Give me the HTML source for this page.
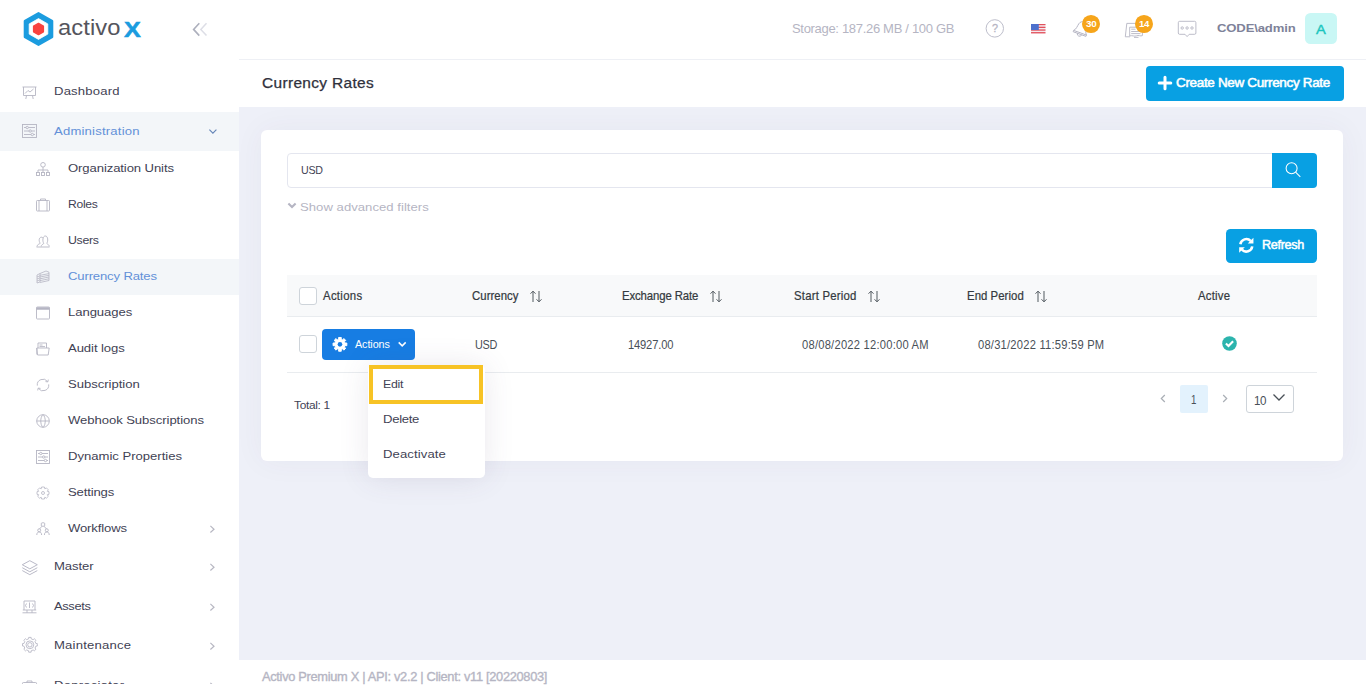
<!DOCTYPE html>
<html lang="en">
<head>
<meta charset="utf-8">
<title>Currency Rates</title>
<style>
*{box-sizing:border-box;margin:0;padding:0}
html,body{width:1366px;height:696px;overflow:hidden}
body{background:#eef0f8;font-family:"Liberation Sans",sans-serif;font-size:13px;color:#3f4254;position:relative}
.abs{position:absolute}
svg{overflow:visible}
.t{position:absolute;white-space:nowrap;line-height:1;transform-origin:0 50%;transform:translateY(-50%)}
.s{font-family:"Liberation Sans",sans-serif}
.g{font-family:"Liberation Sans",sans-serif}
#aside{position:absolute;left:0;top:0;width:239px;height:696px;background:#fff;overflow:hidden}
#topbar{position:absolute;left:239px;top:0;width:1127px;height:60px;background:#fff;border-bottom:1px solid #eef0f5}
#subheader{position:absolute;left:239px;top:60px;width:1127px;height:47px;background:#fff}
#footer{position:absolute;left:239px;top:660px;width:1127px;height:36px;background:#fff}
#card{position:absolute;left:261px;top:130px;width:1082px;height:331px;background:#fff;border-radius:6px;box-shadow:0 0 30px rgba(82,63,105,0.05)}
</style>
</head>
<body>
<div id="aside">
<svg class="abs" style="left:22px;top:11px" width="33" height="36" viewBox="0 0 33 36" stroke-linejoin="round">
<polygon points="16.5,2.2 30.2,10 30.2,26 16.5,33.8 2.8,26 2.8,10" fill="#1b9cdf" stroke="#1b9cdf" stroke-width="2.2"/>
<polygon points="16.5,7.6 25.8,12.9 25.8,23.1 16.5,28.4 7.2,23.1 7.2,12.9" fill="#fff" stroke="#fff" stroke-width="0.8"/>
<polygon points="16.5,12.4 21.4,15.2 21.4,20.8 16.5,23.6 11.6,20.8 11.6,15.2" fill="#f9423f" stroke="#f9423f" stroke-width="1.4"/>
</svg>
<span id="t0" class="t s" style="left:58.00px;top:28.80px;font-size:21.40px;color:#55555d;letter-spacing:0.083px;transform:translateY(-50%) scaleX(1.110);">activo</span>
<span id="t1" class="t s" style="left:123.80px;top:29.70px;font-size:22.40px;color:#1b9cdf;font-weight:700;transform:translateY(-50%) scaleX(1.125);-webkit-text-stroke:0.5px #1b9cdf;">X</span>
<svg class="abs" style="left:190px;top:20px" width="20" height="20" viewBox="190 20 20 20" fill="none" stroke="#b5b5c3" stroke-width="1" ><path d="M199.3 23.2 L193.6 29.4 L199.3 35.6" stroke="#adb0bd" stroke-width="1.6"/><path d="M206.5 23.2 L200.8 29.4 L206.5 35.6" stroke="#dddee6" stroke-width="1.5"/></svg>
<div class="abs" style="left:0;top:112px;width:239px;height:39px;background:#f3f6f9"></div>
<div class="abs" style="left:0;top:259px;width:239px;height:36px;background:#f3f6f9"></div>
<span id="t2" class="t s" style="left:54.00px;top:91.90px;font-size:11.80px;color:#3f4254;letter-spacing:0.161px;transform:translateY(-50%) scaleX(1.110);">Dashboard</span>
<span id="t3" class="t s" style="left:54.00px;top:131.90px;font-size:11.80px;color:#6290d8;letter-spacing:0.175px;transform:translateY(-50%) scaleX(1.110);">Administration</span>
<span id="t4" class="t s" style="left:54.00px;top:566.90px;font-size:11.80px;color:#3f4254;letter-spacing:-0.059px;transform:translateY(-50%) scaleX(1.110);">Master</span>
<span id="t5" class="t s" style="left:54.00px;top:606.90px;font-size:11.80px;color:#3f4254;letter-spacing:-0.300px;transform:translateY(-50%) scaleX(1.091);">Assets</span>
<span id="t6" class="t s" style="left:54.00px;top:645.90px;font-size:11.80px;color:#3f4254;letter-spacing:0.181px;transform:translateY(-50%) scaleX(1.110);">Maintenance</span>
<span id="t7" class="t s" style="left:54.00px;top:685.90px;font-size:11.80px;color:#3f4254;letter-spacing:0.208px;transform:translateY(-50%) scaleX(1.110);">Depreciator</span>
<span id="t8" class="t s" style="left:67.70px;top:168.90px;font-size:11.80px;color:#3f4254;letter-spacing:-0.091px;transform:translateY(-50%) scaleX(1.110);">Organization Units</span>
<span id="t9" class="t s" style="left:67.70px;top:204.90px;font-size:11.80px;color:#3f4254;letter-spacing:-0.300px;transform:translateY(-50%) scaleX(1.029);">Roles</span>
<span id="t10" class="t s" style="left:67.70px;top:240.90px;font-size:11.80px;color:#3f4254;letter-spacing:-0.300px;transform:translateY(-50%) scaleX(1.047);">Users</span>
<span id="t11" class="t s" style="left:67.70px;top:276.90px;font-size:11.80px;color:#6290d8;letter-spacing:-0.136px;transform:translateY(-50%) scaleX(1.110);">Currency Rates</span>
<span id="t12" class="t s" style="left:67.70px;top:312.90px;font-size:11.80px;color:#3f4254;letter-spacing:-0.058px;transform:translateY(-50%) scaleX(1.110);">Languages</span>
<span id="t13" class="t s" style="left:67.70px;top:348.90px;font-size:11.80px;color:#3f4254;letter-spacing:-0.071px;transform:translateY(-50%) scaleX(1.110);">Audit logs</span>
<span id="t14" class="t s" style="left:67.70px;top:384.90px;font-size:11.80px;color:#3f4254;letter-spacing:-0.022px;transform:translateY(-50%) scaleX(1.110);">Subscription</span>
<span id="t15" class="t s" style="left:67.70px;top:420.90px;font-size:11.80px;color:#3f4254;letter-spacing:-0.060px;transform:translateY(-50%) scaleX(1.110);">Webhook Subscriptions</span>
<span id="t16" class="t s" style="left:67.70px;top:456.90px;font-size:11.80px;color:#3f4254;letter-spacing:-0.014px;transform:translateY(-50%) scaleX(1.110);">Dynamic Properties</span>
<span id="t17" class="t s" style="left:67.70px;top:492.90px;font-size:11.80px;color:#3f4254;letter-spacing:-0.133px;transform:translateY(-50%) scaleX(1.110);">Settings</span>
<span id="t18" class="t s" style="left:67.70px;top:528.90px;font-size:11.80px;color:#3f4254;letter-spacing:-0.129px;transform:translateY(-50%) scaleX(1.110);">Workflows</span>
<svg class="abs" style="left:205px;top:124px" width="16" height="15" viewBox="205 124 16 15" fill="none" stroke="#6585b8" stroke-width="1.15" ><path d="M209.4 129.6 L212.9 133.1 L216.4 129.6"/></svg>
<svg class="abs" style="left:208.9px;top:524.8px" width="7" height="8.4" viewBox="0 0 7 8.4" fill="none" stroke="#b7b7c2" stroke-width="1.2" ><path d="M1.4 0.9 L5 4.2 L1.4 7.5"/></svg>
<svg class="abs" style="left:208.9px;top:562.8px" width="7" height="8.4" viewBox="0 0 7 8.4" fill="none" stroke="#b7b7c2" stroke-width="1.2" ><path d="M1.4 0.9 L5 4.2 L1.4 7.5"/></svg>
<svg class="abs" style="left:208.9px;top:602.8px" width="7" height="8.4" viewBox="0 0 7 8.4" fill="none" stroke="#b7b7c2" stroke-width="1.2" ><path d="M1.4 0.9 L5 4.2 L1.4 7.5"/></svg>
<svg class="abs" style="left:208.9px;top:641.8px" width="7" height="8.4" viewBox="0 0 7 8.4" fill="none" stroke="#b7b7c2" stroke-width="1.2" ><path d="M1.4 0.9 L5 4.2 L1.4 7.5"/></svg>
<svg class="abs" style="left:208.9px;top:681.8px" width="7" height="8.4" viewBox="0 0 7 8.4" fill="none" stroke="#b7b7c2" stroke-width="1.2" ><path d="M1.4 0.9 L5 4.2 L1.4 7.5"/></svg>
<svg class="abs" style="left:22px;top:85.8px" width="15" height="14" viewBox="0 0 15 14" fill="none" stroke="#b5b5c3" stroke-width="0.9" ><path d="M0.5 1 H14.5 M1.5 1 V9.5 H13.5 V1 M3 7.5 L6 4.5 L8 6 L11.5 3 M4.5 9.5 L3.8 13 M10.5 9.5 L11.2 13"/></svg>
<svg class="abs" style="left:22px;top:124.0px" width="15" height="14" viewBox="0 0 15 14" fill="none" stroke="#b5b5c3" stroke-width="0.9" ><rect x="0.5" y="0.5" width="14" height="13"/><path d="M2 3.5 H4 M6.5 3.5 H13 M2 7 H7 M9.5 7 H13 M2 10.5 H9 M11.5 10.5 H13"/><circle cx="5.2" cy="3.5" r="1.2"/><circle cx="8.2" cy="7" r="1.2"/><circle cx="10.3" cy="10.5" r="1.2"/></svg>
<svg class="abs" style="left:36px;top:162.0px" width="14" height="14" viewBox="0 0 14 14" fill="none" stroke="#b5b5c3" stroke-width="0.9" ><circle cx="7" cy="2.8" r="2.3"/><path d="M7 5.1 V8 M2 10.5 V8 H12 V10.5 M7 8 V10.5"/><rect x="0.5" y="10.5" width="3" height="3"/><rect x="5.5" y="10.5" width="3" height="3"/><rect x="10.5" y="10.5" width="3" height="3"/></svg>
<svg class="abs" style="left:36px;top:198.0px" width="14" height="14" viewBox="0 0 14 14" fill="none" stroke="#b5b5c3" stroke-width="0.9" ><rect x="0.5" y="2.5" width="13" height="10.5" rx="0.8"/><path d="M3 2.5 V13 M11 2.5 V13 M4.5 2.5 V1 H9.5 V2.5"/></svg>
<svg class="abs" style="left:36px;top:234.0px" width="14" height="14" viewBox="0 0 14 14" fill="none" stroke="#b5b5c3" stroke-width="0.9" ><path d="M0.5 13 H13.5 M1 12.5 C1 10.5 3.2 10.2 4.2 9.3 C2.8 7.5 2.6 3.5 5.3 3.2 C6.2 3.1 6.8 3.6 7 4.2 M5.2 12.5 C5.2 10.6 7 10.4 7.8 9.4 C6.3 7.3 6.5 2 9.3 2 C12.2 2 12.2 7.3 10.8 9.4 C11.6 10.4 13.2 10.6 13.2 12.5"/></svg>
<svg class="abs" style="left:36px;top:270.0px" width="14" height="14" viewBox="0 0 14 14" fill="none" stroke="#b5b5c3" stroke-width="0.8" ><path d="M1 5 L4 3.5 V12 L1 13 Z M4 3.5 L10 1 L13 2.2 V10.5 L4 12.5 M4 5.3 L13 3.6 M4 7 L13 5.3 M4 8.8 L13 7 M4 10.6 L13 8.8 M1 7 L4 5.8 M1 9 L4 7.8 M1 11 L4 9.8"/></svg>
<svg class="abs" style="left:36px;top:306.0px" width="14" height="14" viewBox="0 0 14 14" fill="none" stroke="#b5b5c3" stroke-width="0.9" ><rect x="0.5" y="1" width="13" height="12" rx="0.8"/><path d="M0.5 2 H13.5 M0.5 3 H13.5" stroke-width="1.6"/></svg>
<svg class="abs" style="left:36px;top:342.0px" width="14" height="14" viewBox="0 0 14 14" fill="none" stroke="#b5b5c3" stroke-width="0.9" ><path d="M2 6 V1 H10.5 V6 M3.5 3 H6.5 M3.5 4.6 H9 M0.8 6 H13.2 L12.2 13 H1.6 Z M0.8 6 V12.5"/></svg>
<svg class="abs" style="left:36px;top:378.0px" width="14" height="14" viewBox="0 0 14 14" fill="none" stroke="#b5b5c3" stroke-width="0.9" ><path d="M1.3 7.6 A5.7 5.7 0 0 1 11.6 3.6 M12.7 6.4 A5.7 5.7 0 0 1 2.4 10.4 M12.3 1.6 L11.8 3.9 L9.5 3.6 M1.7 12.4 L2.2 10.1 L4.5 10.4"/></svg>
<svg class="abs" style="left:36px;top:414.0px" width="14" height="14" viewBox="0 0 14 14" fill="none" stroke="#b5b5c3" stroke-width="0.9" ><circle cx="7" cy="7" r="6.3"/><path d="M0.7 7 H13.3 M7 0.7 C4 3 4 11 7 13.3 M7 0.7 C10 3 10 11 7 13.3"/></svg>
<svg class="abs" style="left:36px;top:450.0px" width="14" height="14" viewBox="0 0 14 14" fill="none" stroke="#b5b5c3" stroke-width="0.9" ><rect x="0.5" y="0.5" width="13" height="13"/><path d="M2 3.5 H3.6 M6 3.5 H12 M2 7 H6.4 M9 7 H12 M2 10.5 H8.2 M10.8 10.5 H12"/><circle cx="4.8" cy="3.5" r="1.2"/><circle cx="7.7" cy="7" r="1.2"/><circle cx="9.5" cy="10.5" r="1.2"/></svg>
<svg class="abs" style="left:36px;top:486.0px" width="14" height="14" viewBox="0 0 14 14" fill="none" stroke="#b5b5c3" stroke-width="0.8" ><path d="M5.6 1 H8.4 L8.8 2.8 L10.4 1.9 L12.3 3.8 L11.3 5.3 L13 5.7 V8.3 L11.3 8.7 L12.3 10.3 L10.4 12.2 L8.8 11.2 L8.4 13 H5.6 L5.2 11.2 L3.6 12.2 L1.7 10.3 L2.7 8.7 L1 8.3 V5.7 L2.7 5.3 L1.7 3.8 L3.6 1.9 L5.2 2.8 Z"/><circle cx="7" cy="7" r="1.5"/></svg>
<svg class="abs" style="left:36px;top:522.0px" width="14" height="14" viewBox="0 0 14 14" fill="none" stroke="#b5b5c3" stroke-width="0.9" ><rect x="5.3" y="0.8" width="3.4" height="3.4" rx="0.8"/><path d="M6 4.2 L3.5 7 M8 4.2 L10.5 7 M0.8 13 C0.8 10.8 1.8 10 3.2 10 C4.6 10 5.6 10.8 5.6 13 M8.4 13 C8.4 10.8 9.4 10 10.8 10 C12.2 10 13.2 10.8 13.2 13"/><circle cx="3.2" cy="8.3" r="1.5"/><circle cx="10.8" cy="8.3" r="1.5"/></svg>
<svg class="abs" style="left:20px;top:558px" width="20" height="19" viewBox="20 558 20 19" fill="none" stroke="#b5b5c3" stroke-width="1" ><g transform="translate(21.4 559.8) scale(1.12 1.1)"><path d="M7.5 0.8 L14.2 4.5 L7.5 8.2 L0.8 4.5 Z M0.8 7.2 L7.5 10.9 L14.2 7.2 M0.8 9.8 L7.5 13.5 L14.2 9.8" stroke-width="0.85"/></g></svg>
<svg class="abs" style="left:22px;top:599.5px" width="15" height="14" viewBox="0 0 15 14" fill="none" stroke="#b5b5c3" stroke-width="0.9" ><path d="M2 10 V1 H13 V10 M0.5 12.8 H14.5 M5 10 V12.8 M10 10 V12.8 M0.8 10 H14.2 M4.5 3.5 L3.5 5.5 L4.5 7.5 M10.5 3.5 L11.5 5.5 L10.5 7.5 M7.5 2.5 V8"/></svg>
<svg class="abs" style="left:20px;top:635px" width="20" height="20" viewBox="20 635 20 20" fill="none" stroke="#b5b5c3" stroke-width="0.85" stroke-linejoin="round"><path d="M28.59 638.84 L28.69 637.40 L31.11 637.40 L31.21 638.84 L33.19 639.66 L34.28 638.71 L35.99 640.42 L35.04 641.51 L35.86 643.49 L37.30 643.59 L37.30 646.01 L35.86 646.11 L35.04 648.09 L35.99 649.18 L34.28 650.89 L33.19 649.94 L31.21 650.76 L31.11 652.20 L28.69 652.20 L28.59 650.76 L26.61 649.94 L25.52 650.89 L23.81 649.18 L24.76 648.09 L23.94 646.11 L22.50 646.01 L22.50 643.59 L23.94 643.49 L24.76 641.51 L23.81 640.42 L25.52 638.71 L26.61 639.66 Z"/><circle cx="29.9" cy="644.8" r="3.9"/><circle cx="29.9" cy="644.8" r="2.2"/></svg>
<svg class="abs" style="left:22px;top:679.5px" width="15" height="14" viewBox="0 0 15 14" fill="none" stroke="#b5b5c3" stroke-width="0.9" ><rect x="0.5" y="2.5" width="14" height="11" rx="0.8"/><path d="M5 2.5 V1 H10 V2.5"/></svg>
<div class="abs" style="left:0;top:684px;width:239px;height:12px;background:#fff"></div>
</div>
<div id="topbar"></div>
<span id="t19" class="t s" style="left:791.60px;top:29.20px;font-size:12.20px;color:#b5b5c3;letter-spacing:-0.300px;transform:translateY(-50%) scaleX(1.068);">Storage: 187.26 MB / 100 GB</span>
<svg class="abs" style="left:984px;top:17px" width="22" height="23" viewBox="984 17 22 23" fill="none" stroke="#bdbecb" stroke-width="1" ><circle cx="994.8" cy="28.4" r="8.7"/></svg>
<span id="t20" class="t s" style="left:991.90px;top:29.10px;font-size:11.40px;color:#b5b5c3;transform:translateY(-50%) scaleX(0.946);-webkit-text-stroke:0.3px #b5b5c3;">?</span>
<svg class="abs" style="left:1030.8px;top:24.3px" width="14.5" height="9.4" viewBox="0 0 14.5 9.4">
<rect width="14.5" height="9.4" fill="#f4e9ee"/>
<g fill="#e2515b"><rect y="0" width="14.5" height="1.2"/><rect y="2.7" width="14.5" height="1.3"/><rect y="5.4" width="14.5" height="1.3"/><rect y="8.1" width="14.5" height="1.3"/></g>
<rect width="7.8" height="6" fill="#4d70cc"/></svg>
<svg class="abs" style="left:1070px;top:18px" width="22" height="22" viewBox="1070 18 22 22" fill="none" stroke="#b5b5c3" stroke-width="0.9" ><g transform="translate(1081.6 28.4) rotate(20)"><path d="M-6.8 4.6 C-4.6 2.6 -4.8 -1 -4.2 -3.4 C-3.2 -8 3.2 -8 4.2 -3.4 C4.8 -1 4.6 2.6 6.8 4.6 Z M-6.8 4.6 V6 H6.8 V4.6 M-2.2 6 A2.2 2.2 0 0 0 2.2 6"/></g></svg>
<div class="abs" style="left:1082px;top:14.8px;width:17.8px;height:17.8px;border-radius:50%;background:#f6a51b"></div>
<span id="t21" class="t s" style="left:1085.80px;top:23.80px;font-size:9.60px;color:#fff;font-weight:700;letter-spacing:-0.300px;transform:translateY(-50%) scaleX(1.032);">30</span>
<svg class="abs" style="left:1123px;top:20px" width="23" height="20" viewBox="1123 20 23 20" fill="none" stroke="#b5b5c3" stroke-width="0.9" ><path d="M1126.8 23.4 H1139 M1126.8 23.4 L1125.3 36.8 H1130 M1129.7 27.2 H1142.4 V35.6 C1140.5 36.6 1138.5 34.8 1136.5 35.8 C1134.5 36.8 1132 35 1129.7 36 Z M1131.2 29.2 H1135.5 M1131.2 31.5 H1140.5 M1131.2 33.6 H1140.5 M1134 37.4 H1138.5"/></svg>
<div class="abs" style="left:1135.3px;top:14.8px;width:17.8px;height:17.8px;border-radius:50%;background:#f6a51b"></div>
<span id="t22" class="t s" style="left:1139.20px;top:23.80px;font-size:9.60px;color:#fff;font-weight:700;letter-spacing:-0.300px;transform:translateY(-50%) scaleX(1.003);">14</span>
<svg class="abs" style="left:1176px;top:19px" width="23" height="20" viewBox="1176 19 23 20" fill="none" stroke="#b5b5c3" stroke-width="0.9" ><path d="M1179.6 21.3 H1194.6 Q1195.9 21.3 1195.9 22.6 V33 Q1195.9 34.3 1194.6 34.3 H1189.2 L1187.1 36.6 L1185 34.3 H1179.6 Q1178.3 34.3 1178.3 33 V22.6 Q1178.3 21.3 1179.6 21.3 Z"/><circle cx="1182.2" cy="28" r="1.2"/><circle cx="1187.1" cy="28" r="1.2"/><circle cx="1192" cy="28" r="1.2"/></svg>
<span id="t23" class="t s" style="left:1217.10px;top:28.90px;font-size:11.80px;color:#7e8299;font-weight:700;letter-spacing:-0.134px;transform:translateY(-50%) scaleX(1.110);">CODE\admin</span>
<div class="abs" style="left:1304.9px;top:13.1px;width:31.8px;height:31.3px;border-radius:5.5px;background:#c9f7f5"></div>
<span id="t24" class="t s" style="left:1316.10px;top:30.10px;font-size:13.60px;color:#1bc5bd;transform:translateY(-50%) scaleX(1.080);-webkit-text-stroke:0.4px #1bc5bd;">A</span>
<div id="subheader"></div>
<span id="t25" class="t s" style="left:261.80px;top:83.70px;font-size:13.80px;color:#30313c;letter-spacing:0.300px;transform:translateY(-50%) scaleX(1.120);-webkit-text-stroke:0.25px #30313c;">Currency Rates</span>
<div class="abs" style="left:1146px;top:66px;width:198px;height:35px;border-radius:4px;background:#08a0e3"></div>
<svg class="abs" style="left:1158px;top:75.9px" width="14" height="14" viewBox="0 0 14 14"><path d="M7 1.2 V12.8 M1.2 7 H12.8" stroke="#fff" stroke-width="3" stroke-linecap="round"/></svg>
<span id="t26" class="t s" style="left:1176.40px;top:83.10px;font-size:12.30px;color:#fff;letter-spacing:-0.300px;transform:translateY(-50%) scaleX(1.096);-webkit-text-stroke:0.5px #fff;">Create New Currency Rate</span>
<div id="card"></div>
<div class="abs" style="left:287px;top:153px;width:987px;height:35px;border:1px solid #e4e6ef;border-radius:4px 0 0 4px;background:#fff"></div>
<div class="abs" style="left:1272px;top:153px;width:45px;height:35px;border-radius:0 4px 4px 0;background:#08a0e3"></div>
<svg class="abs" style="left:1283px;top:159px" width="22" height="22" viewBox="1283 159 22 22" fill="none" stroke="#fff" stroke-width="1.05" ><circle cx="1291.6" cy="168.2" r="5.5"/><path d="M1295.6 172.2 L1300.3 176.9"/></svg>
<span id="t27" class="t s" style="left:300.50px;top:169.90px;font-size:11.00px;color:#3f4254;letter-spacing:-0.300px;transform:translateY(-50%) scaleX(0.968);">USD</span>
<svg class="abs" style="left:286px;top:200px" width="13" height="11" viewBox="286 200 13 11" fill="none" stroke="#b5b5c3" stroke-width="2.1" ><path d="M288.4 203.5 L292 207.1 L295.6 203.5"/></svg>
<span id="t28" class="t s" style="left:299.70px;top:207.80px;font-size:11.80px;color:#b5b5c3;letter-spacing:0.031px;transform:translateY(-50%) scaleX(1.110);">Show advanced filters</span>
<div class="abs" style="left:1226px;top:229.2px;width:91px;height:33.7px;border-radius:4.5px;background:#08a0e3"></div>
<svg class="abs" style="left:1238.2px;top:237px" width="16.6" height="16.6" viewBox="0 0 17 17" fill="none" stroke="#fff" stroke-width="2.6">
<path d="M2.4 7.4 A6.2 6.2 0 0 1 13 4"/><path d="M14.6 9.6 A6.2 6.2 0 0 1 4 13"/>
<path d="M15.8 0.8 V6.6 H10 Z" fill="#fff" stroke="none"/><path d="M1.2 16.2 V10.4 H7 Z" fill="#fff" stroke="none"/></svg>
<span id="t29" class="t s" style="left:1261.70px;top:244.60px;font-size:12.30px;color:#fff;letter-spacing:-0.300px;transform:translateY(-50%) scaleX(1.025);-webkit-text-stroke:0.5px #fff;">Refresh</span>
<div class="abs" style="left:287px;top:275px;width:1030px;height:42px;background:#f8f9fa;border-bottom:1px solid #e9ecef"></div>
<div class="abs" style="left:287px;top:372px;width:1030px;height:1px;background:#e9ecef"></div>
<div class="abs" style="left:299px;top:287px;width:18px;height:18px;border:1px solid #ced4da;border-radius:3px;background:#fff"></div>
<div class="abs" style="left:299px;top:335px;width:18px;height:18px;border:1px solid #ced4da;border-radius:3px;background:#fff"></div>
<span id="t30" class="t g" style="left:322.50px;top:296.50px;font-size:11.90px;color:#343a40;letter-spacing:0.324px;transform:translateY(-50%) scaleX(0.955);-webkit-text-stroke:0.22px #343a40;">Actions</span>
<span id="t31" class="t g" style="left:472.00px;top:296.50px;font-size:11.90px;color:#343a40;letter-spacing:0.063px;transform:translateY(-50%) scaleX(0.955);-webkit-text-stroke:0.22px #343a40;">Currency</span>
<span id="t32" class="t g" style="left:621.70px;top:296.50px;font-size:11.90px;color:#343a40;letter-spacing:-0.118px;transform:translateY(-50%) scaleX(0.955);-webkit-text-stroke:0.22px #343a40;">Exchange Rate</span>
<span id="t33" class="t g" style="left:794.00px;top:296.50px;font-size:11.90px;color:#343a40;letter-spacing:0.231px;transform:translateY(-50%) scaleX(0.955);-webkit-text-stroke:0.22px #343a40;">Start Period</span>
<span id="t34" class="t g" style="left:967.00px;top:296.50px;font-size:11.90px;color:#343a40;letter-spacing:0.059px;transform:translateY(-50%) scaleX(0.955);-webkit-text-stroke:0.22px #343a40;">End Period</span>
<span id="t35" class="t g" style="left:1198.30px;top:296.50px;font-size:11.90px;color:#343a40;letter-spacing:0.244px;transform:translateY(-50%) scaleX(0.955);-webkit-text-stroke:0.22px #343a40;">Active</span>
<svg class="abs" style="left:529.5px;top:289.5px" width="12" height="13" viewBox="0 0 12 13" fill="none" stroke="#495057" stroke-width="0.95" ><path d="M3 12 V1.2 M0.5 3.7 L3 1.2 L5.5 3.7 M9 1 V11.8 M6.5 9.3 L9 11.8 L11.5 9.3"/></svg>
<svg class="abs" style="left:709.5px;top:289.5px" width="12" height="13" viewBox="0 0 12 13" fill="none" stroke="#495057" stroke-width="0.95" ><path d="M3 12 V1.2 M0.5 3.7 L3 1.2 L5.5 3.7 M9 1 V11.8 M6.5 9.3 L9 11.8 L11.5 9.3"/></svg>
<svg class="abs" style="left:867.5px;top:289.5px" width="12" height="13" viewBox="0 0 12 13" fill="none" stroke="#495057" stroke-width="0.95" ><path d="M3 12 V1.2 M0.5 3.7 L3 1.2 L5.5 3.7 M9 1 V11.8 M6.5 9.3 L9 11.8 L11.5 9.3"/></svg>
<svg class="abs" style="left:1034.5px;top:289.5px" width="12" height="13" viewBox="0 0 12 13" fill="none" stroke="#495057" stroke-width="0.95" ><path d="M3 12 V1.2 M0.5 3.7 L3 1.2 L5.5 3.7 M9 1 V11.8 M6.5 9.3 L9 11.8 L11.5 9.3"/></svg>
<div class="abs" style="left:322px;top:329px;width:93px;height:31px;border-radius:4px;background:#177de3"></div>
<svg class="abs" style="left:331px;top:335px" width="18" height="19" viewBox="331 335 18 19" fill="none" stroke="none" stroke-width="1" ><path fill="#fff" stroke="#fff" stroke-width="1" stroke-linejoin="round" d="M338.70 339.30 L338.60 337.48 L341.30 337.48 L341.20 339.30 L342.63 339.90 L343.85 338.54 L345.76 340.45 L344.40 341.67 L345.00 343.10 L346.82 343.00 L346.82 345.70 L345.00 345.60 L344.40 347.03 L345.76 348.25 L343.85 350.16 L342.63 348.80 L341.20 349.40 L341.30 351.22 L338.60 351.22 L338.70 349.40 L337.27 348.80 L336.05 350.16 L334.14 348.25 L335.50 347.03 L334.90 345.60 L333.08 345.70 L333.08 343.00 L334.90 343.10 L335.50 341.67 L334.14 340.45 L336.05 338.54 L337.27 339.90 Z"/><circle cx="339.95" cy="344.35" r="2.3" fill="#177de3" stroke="none"/></svg>
<span id="t36" class="t g" style="left:354.80px;top:343.50px;font-size:11.60px;color:#fff;letter-spacing:-0.084px;transform:translateY(-50%) scaleX(0.930);">Actions</span>
<svg class="abs" style="left:396px;top:339px" width="13" height="10" viewBox="396 339 13 10" fill="none" stroke="#fff" stroke-width="1.5" ><path d="M398.7 342.4 L402.2 345.9 L405.7 342.4"/></svg>
<span id="t37" class="t g" style="left:474.60px;top:345.40px;font-size:12.00px;color:#495057;letter-spacing:-0.300px;transform:translateY(-50%) scaleX(0.905);">USD</span>
<span id="t38" class="t g" style="left:627.60px;top:345.40px;font-size:12.00px;color:#495057;letter-spacing:-0.178px;transform:translateY(-50%) scaleX(0.930);">14927.00</span>
<span id="t39" class="t g" style="left:802.30px;top:345.40px;font-size:12.00px;color:#495057;letter-spacing:0.255px;transform:translateY(-50%) scaleX(0.930);">08/08/2022 12:00:00 AM</span>
<span id="t40" class="t g" style="left:977.80px;top:345.40px;font-size:12.00px;color:#495057;letter-spacing:0.240px;transform:translateY(-50%) scaleX(0.930);">08/31/2022 11:59:59 PM</span>
<svg class="abs" style="left:1222.4px;top:335.9px" width="15" height="15" viewBox="0 0 15 15"><circle cx="7.5" cy="7.5" r="7.3" fill="#2cb4ad"/><path d="M3.9 7.6 L6.5 10.1 L11.1 5.3" fill="none" stroke="#fff" stroke-width="2.1"/></svg>
<span id="t41" class="t s" style="left:293.50px;top:405.80px;font-size:11.80px;color:#3f4254;letter-spacing:-0.300px;transform:translateY(-50%) scaleX(1.007);">Total: 1</span>
<svg class="abs" style="left:1160px;top:393.5px" width="6" height="9" viewBox="0 0 6 9" fill="none" stroke="#a9aeb5" stroke-width="1.2" ><path d="M4.8 1 L1.3 4.5 L4.8 8"/></svg>
<div class="abs" style="left:1180px;top:385px;width:28px;height:28px;border-radius:2px;background:#e3f2fd"></div>
<span id="t42" class="t g" style="left:1191.20px;top:399.50px;font-size:13.20px;color:#495057;transform:translateY(-50%) scale(0.735,0.920);">1</span>
<svg class="abs" style="left:1222px;top:393.5px" width="6" height="9" viewBox="0 0 6 9" fill="none" stroke="#a9aeb5" stroke-width="1.2" ><path d="M1.2 1 L4.7 4.5 L1.2 8"/></svg>
<div class="abs" style="left:1246px;top:385px;width:48px;height:28px;border:1px solid #ced4da;border-radius:3px;background:#fff"></div>
<span id="t43" class="t g" style="left:1253.50px;top:400.50px;font-size:13.20px;color:#495057;letter-spacing:-0.467px;transform:translateY(-50%) scale(0.880,0.920);">10</span>
<svg class="abs" style="left:1272px;top:393px" width="14" height="9" viewBox="0 0 14 9" fill="none" stroke="#495057" stroke-width="1.3" ><path d="M1.5 1.5 L7 7 L12.5 1.5"/></svg>
<div class="abs" style="left:368.3px;top:365px;width:116.4px;height:112.6px;border-radius:5px;background:#fff;box-shadow:0 0 30px rgba(82,63,105,0.12)"></div>
<div class="abs" style="left:369.2px;top:365px;width:113.8px;height:38.6px;border:4.7px solid #f7c325;background:#fff"></div>
<span id="t44" class="t s" style="left:383.30px;top:384.80px;font-size:11.80px;color:#3f4254;letter-spacing:-0.300px;transform:translateY(-50%) scaleX(1.045);">Edit</span>
<span id="t45" class="t s" style="left:383.30px;top:419.80px;font-size:11.80px;color:#3f4254;letter-spacing:-0.263px;transform:translateY(-50%) scaleX(1.110);">Delete</span>
<span id="t46" class="t s" style="left:383.30px;top:454.80px;font-size:11.80px;color:#3f4254;letter-spacing:0.092px;transform:translateY(-50%) scaleX(1.110);">Deactivate</span>
<div id="footer"></div>
<span id="t47" class="t s" style="left:261.50px;top:677.30px;font-size:12.40px;color:#b5b5c3;letter-spacing:-0.300px;transform:translateY(-50%) scaleX(1.035);-webkit-text-stroke:0.35px #b5b5c3;">Activo Premium X | API: v2.2 | Client: v11 [20220803]</span>
</body>
</html>
